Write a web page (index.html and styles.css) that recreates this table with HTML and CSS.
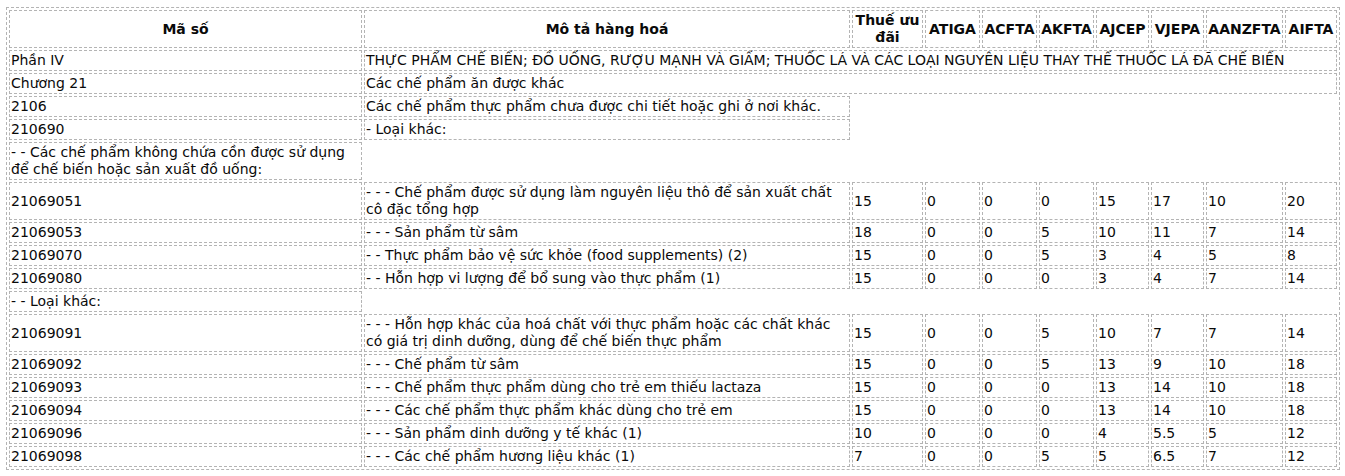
FILE: index.html
```html
<!DOCTYPE html>
<html lang="vi">
<head>
<meta charset="utf-8">
<title>Biểu thuế</title>
<link rel="stylesheet" href="styles.css">
</head>
<body>
<table class="tariff">
  <colgroup>
    <col class="c-code">
    <col class="c-desc">
    <col class="c-pref">
    <col class="c-atiga">
    <col class="c-acfta">
    <col class="c-akfta">
    <col class="c-ajcep">
    <col class="c-vjepa">
    <col class="c-aanzfta">
    <col class="c-aifta">
  </colgroup>
  <thead>
    <tr>
      <th>Mã số</th>
      <th>Mô tả hàng hoá</th>
      <th>Thuế ưu đãi</th>
      <th>ATIGA</th>
      <th>ACFTA</th>
      <th>AKFTA</th>
      <th>AJCEP</th>
      <th>VJEPA</th>
      <th>AANZFTA</th>
      <th>AIFTA</th>
    </tr>
  </thead>
  <tbody>
    <tr><td>Phần IV</td><td colspan="9">THỰC PHẨM CHẾ BIẾN; ĐỒ UỐNG, RƯỢU MẠNH VÀ GIẤM; THUỐC LÁ VÀ CÁC LOẠI NGUYÊN LIỆU THAY THẾ THUỐC LÁ ĐÃ CHẾ BIẾN</td></tr>
    <tr><td>Chương 21</td><td colspan="9">Các chế phẩm ăn được khác</td></tr>
    <tr><td>2106</td><td>Các chế phẩm thực phẩm chưa được chi tiết hoặc ghi ở nơi khác.</td></tr>
    <tr><td>210690</td><td>- Loại khác:</td></tr>
    <tr><td>- - Các chế phẩm không chứa cồn được sử dụng để chế biến hoặc sản xuất đồ uống:</td></tr>
    <tr><td>21069051</td><td>- - - Chế phẩm được sử dụng làm nguyên liệu thô để sản xuất chất cô đặc tổng hợp</td><td>15</td><td>0</td><td>0</td><td>0</td><td>15</td><td>17</td><td>10</td><td>20</td></tr>
    <tr><td>21069053</td><td>- - - Sản phẩm từ sâm</td><td>18</td><td>0</td><td>0</td><td>5</td><td>10</td><td>11</td><td>7</td><td>14</td></tr>
    <tr><td>21069070</td><td>- - Thực phẩm bảo vệ sức khỏe (food supplements) (2)</td><td>15</td><td>0</td><td>0</td><td>5</td><td>3</td><td>4</td><td>5</td><td>8</td></tr>
    <tr><td>21069080</td><td>- - Hỗn hợp vi lượng để bổ sung vào thực phẩm (1)</td><td>15</td><td>0</td><td>0</td><td>0</td><td>3</td><td>4</td><td>7</td><td>14</td></tr>
    <tr><td>- - Loại khác:</td></tr>
    <tr><td>21069091</td><td>- - - Hỗn hợp khác của hoá chất với thực phẩm hoặc các chất khác có giá trị dinh dưỡng, dùng để chế biến thực phẩm</td><td>15</td><td>0</td><td>0</td><td>5</td><td>10</td><td>7</td><td>7</td><td>14</td></tr>
    <tr><td>21069092</td><td>- - - Chế phẩm từ sâm</td><td>15</td><td>0</td><td>0</td><td>5</td><td>13</td><td>9</td><td>10</td><td>18</td></tr>
    <tr><td>21069093</td><td>- - - Chế phẩm thực phẩm dùng cho trẻ em thiếu lactaza</td><td>15</td><td>0</td><td>0</td><td>0</td><td>13</td><td>14</td><td>10</td><td>18</td></tr>
    <tr><td>21069094</td><td>- - - Các chế phẩm thực phẩm khác dùng cho trẻ em</td><td>15</td><td>0</td><td>0</td><td>0</td><td>13</td><td>14</td><td>10</td><td>18</td></tr>
    <tr><td>21069096</td><td>- - - Sản phẩm dinh dưỡng y tế khác (1)</td><td>10</td><td>0</td><td>0</td><td>0</td><td>4</td><td>5.5</td><td>5</td><td>12</td></tr>
    <tr><td>21069098</td><td>- - - Các chế phẩm hương liệu khác (1)</td><td>7</td><td>0</td><td>0</td><td>5</td><td>5</td><td>6.5</td><td>7</td><td>12</td></tr>
  </tbody>
</table>
</body>
</html>
```
FILE: styles.css
```css
html, body {
  background: #ffffff;
}
body {
  margin: 7px 0 0 6px;
  font-family: "DejaVu Sans", Verdana, sans-serif;
  font-size: 14px;
  line-height: 17px;
  color: #0a0a0a;
}
.tariff {
  table-layout: fixed;
  width: 1334px;
  border: 1px dashed #b4b4b4;
  border-spacing: 2px;
}
.tariff th,
.tariff td {
  border: 1px dashed #b4b4b4;
  padding: 1px;
  vertical-align: middle;
  text-align: left;
  font-weight: normal;
}
.tariff th {
  text-align: center;
  font-weight: bold;
  font-size: 14px;
}
.c-code { width: 353px; }
.c-desc { width: 486px; }
.c-pref { width: 71px; }
.c-atiga { width: 55px; }
.c-acfta { width: 55px; }
.c-akfta { width: 55px; }
.c-ajcep { width: 53px; }
.c-vjepa { width: 53px; }
.c-aanzfta { width: 77px; }
.c-aifta { width: 52px; }
```
